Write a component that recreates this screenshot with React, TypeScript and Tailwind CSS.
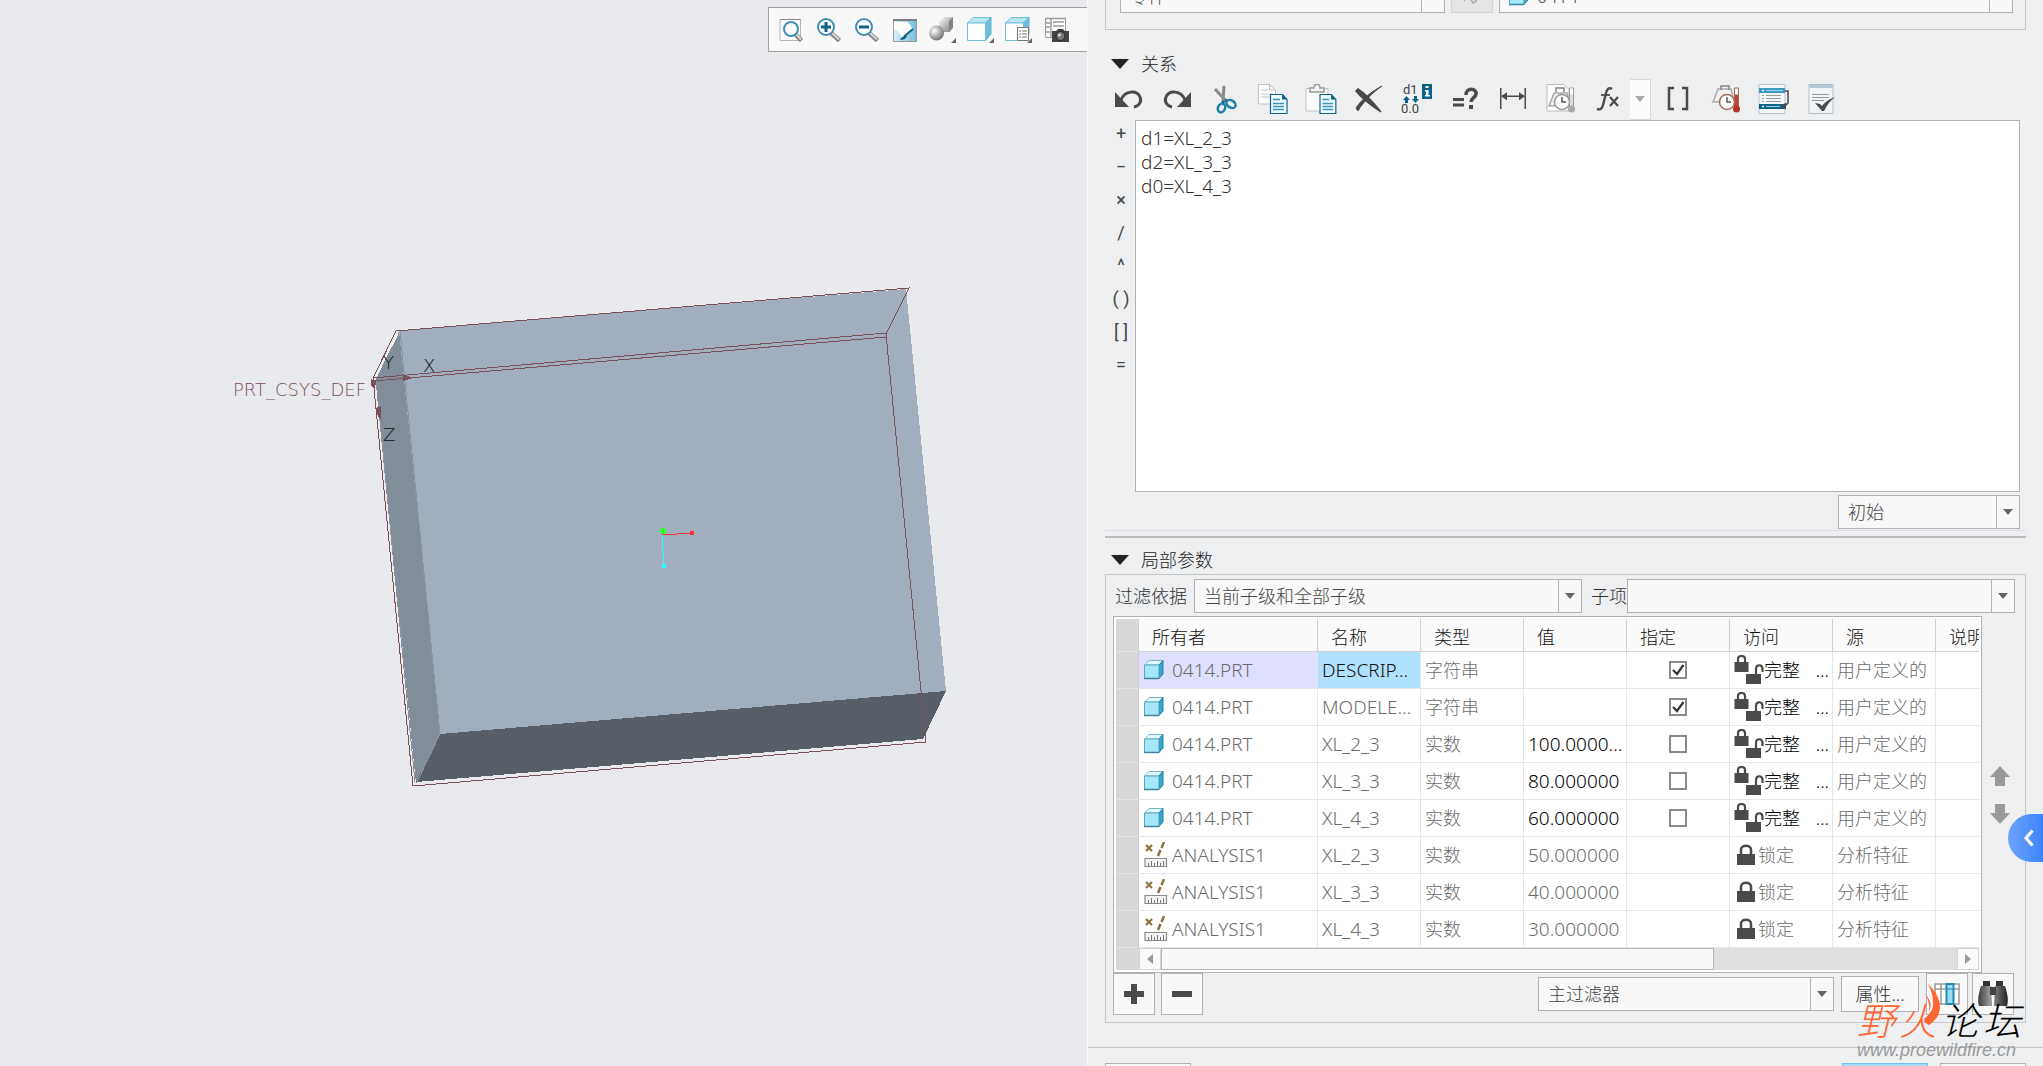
import React from 'react';

const ink = '#4a4a4a';
const blue = '#0e6286';
const maroon = '#7d4f56';

/* ---------- small shared controls ---------- */

type ComboProps = {
  id: string;
  value: string;
  label?: string;
  icon?: React.ReactNode;
  className?: string;
};

const Combo: React.FC<ComboProps> = ({ id, value, label, icon, className = '' }) => (
  <div className={`relative flex h-[34px] items-center border border-[#b0b1b3] bg-[#f8f8f8] pl-[9px] ${className}`}>
    {icon}
    <select
      id={id}
      aria-label={label}
      defaultValue={value}
      className={`h-full min-w-0 flex-1 appearance-none bg-transparent pr-6 text-[18px] text-[#444] outline-none ${icon ? 'pl-2' : ''}`}
    >
      <option value={value}>{value}</option>
    </select>
    <span className="pointer-events-none absolute inset-y-0 right-0 flex w-[23px] items-center justify-center border-l border-[#b0b1b3]">
      <svg width="10" height="6" viewBox="0 0 10 6">
        <path d="M0 0h10L5 6z" fill="#666" />
      </svg>
    </span>
  </div>
);

const SectionTitle: React.FC<{ children: React.ReactNode }> = ({ children }) => (
  <h2 className="flex items-center gap-3 pl-[6px] text-[18px] leading-6 text-[#222]">
    <svg width="18" height="10" viewBox="0 0 18 10">
      <path d="M0 0h18L9 10z" fill="#222" />
    </svg>
    {children}
  </h2>
);

/* ---------- viewport toolbar icons ---------- */

const Lens: React.FC<{ sign?: 'plus' | 'minus'; page?: boolean }> = ({ sign, page }) => {
  const cx = page ? 12 : 9;
  const cy = page ? 11 : 9;
  const r = page ? 7 : 8;
  return (
    <svg width="24" height="24" viewBox="0 0 24 24" fill="none">
      {page && <path d="M1 1.5h20.500v21H1z" fill="#fbfbfb" stroke="#b5b5b5" />}
      {page && <path d="M1 1.500h20.500" stroke="#888" />}
      <path d={`M${cx + 5} ${cy + 6}L22.500 22.500`} stroke="#808080" strokeWidth="4.500" />
      <path d={`M${cx + 5} ${cy + 5}L22 21.500`} stroke="#d9d9d9" strokeWidth="2" />
      <circle cx={cx} cy={cy} r={r} fill="#fff" stroke="#3f8fb3" strokeWidth="2" />
      {sign && <path d={`M${cx - 5} ${cy}h10`} stroke={blue} strokeWidth="3" />}
      {sign === 'plus' && <path d={`M${cx} ${cy - 5}v10`} stroke={blue} strokeWidth="3" />}
    </svg>
  );
};

const RepaintIcon = () => (
  <svg width="24" height="24" viewBox="0 0 24 24">
    <defs>
      <linearGradient id="repaint" x1="0" x2="1" y1="0" y2="0">
        <stop offset="0" stopColor="#d9f1f9" />
        <stop offset="1" stopColor="#74bddb" />
      </linearGradient>
    </defs>
    <path d="M.500 1.500h23v22H.500z" fill="url(#repaint)" stroke="#999" />
    <path d="M1 4h13c3 2 5 5 5 8-3 4-7 5-9 10C8 16 5 13 1 11z" fill="#fff" />
    <path d="M0 1h24v2H0z" fill="#7d7d7d" />
    <path d="M20 11L11 18.500" stroke={blue} strokeWidth="2" />
    <path d="M7 22c2-4 4-4 7-4-1 3-4 4-7 4z" fill={blue} />
  </svg>
);

const Corner = () => <path d="M27 22v5h-5z" fill="#666" />;

const ShadeIcon = () => (
  <svg width="28" height="28" viewBox="0 0 28 28">
    <defs>
      <radialGradient id="ball" cx=".35" cy=".35" r=".7">
        <stop offset="0" stopColor="#fff" />
        <stop offset="1" stopColor="#6e6e6e" />
      </radialGradient>
      <linearGradient id="block" x1="0" x2="1" y1="0" y2="1">
        <stop offset="0" stopColor="#fff" />
        <stop offset="1" stopColor="#777" />
      </linearGradient>
    </defs>
    <path d="M10 5l4-4h10v10l-4 5H10z" fill="url(#block)" />
    <path d="M20 5l4-4v11l-4 4z" fill="#858585" />
    <circle cx="7.500" cy="17" r="7.500" fill="url(#ball)" />
    <Corner />
  </svg>
);

const BoxIcon: React.FC<{ list?: boolean }> = ({ list }) => (
  <svg width="28" height="28" viewBox="0 0 28 28">
    <path d="M.500 7L6 1.500h18L18.500 7z" fill="#bce5f3" stroke="#6fc0dc" />
    <path d="M18.500 7L24 1.500V18l-5.500 6.500z" fill="#6fbdd9" stroke="#5fb4d2" />
    <path d="M.500 7h18v17.500H.500z" fill="#fff" stroke="#6fc0dc" />
    {list && (
      <g>
        <path d="M12.500 11.500h11v13h-11z" fill="#fff" stroke="#777" />
        <path d="M14 15h8M14 18h8M14 21h8" stroke="#777" strokeDasharray="2 1 5" />
      </g>
    )}
    <Corner />
  </svg>
);

const CameraTable = () => (
  <svg width="26" height="26" viewBox="0 0 26 26" fill="none">
    <path d="M1.500 1.500h20v19h-20z" fill="#fff" stroke="#999" />
    <path d="M1 1.500h21M7 1v20M1 6h5M1 10h5M1 15h5M9 5h11M9 9h11" stroke="#999" strokeWidth="1.500" />
    <path d="M8 14h4l2-2h5l2 2h4v11H8z" fill="#444" />
    <circle cx="16.500" cy="19" r="4.500" fill="#777" stroke="#222" />
    <circle cx="15.500" cy="18" r="1.500" fill="#ddd" />
  </svg>
);

/* ---------- relation toolbar icons ---------- */

const Undo: React.FC<{ flip?: boolean }> = ({ flip }) => (
  <svg width="30" height="30" viewBox="0 0 30 30" className={flip ? '-scale-x-100' : ''}>
    <path d="M1 8v15h14z" fill={ink} />
    <path d="M7 16C11 6 23 6 26 13c2 5-1 9-6 10" fill="none" stroke={ink} strokeWidth="3" />
  </svg>
);

const Cut = () => (
  <svg width="30" height="30" viewBox="0 0 30 30" fill="none">
    <path d="M5 5l11 12M14 2l-1 15" stroke="#8a8a8a" strokeWidth="3" />
    <path d="M15 16l2 1M13 17v3" stroke={blue} strokeWidth="3" />
    <ellipse cx="21" cy="20" rx="5" ry="3.500" transform="rotate(35 21 20)" stroke="#1b80aa" strokeWidth="2.500" />
    <ellipse cx="11.500" cy="24" rx="3.500" ry="4.500" transform="rotate(25 11.500 24)" stroke="#1b80aa" strokeWidth="2.500" />
  </svg>
);

const BlueSheet = () => (
  <g>
    <path d="M12.500 10.500h12l4.500 5v14H12.500z" fill="#eefafd" stroke={blue} strokeWidth="1.200" />
    <path d="M24 10.500v5h5z" fill={blue} />
    <path d="M15 15.500h7M15 19.500h11M15 22.500h11M15 25.500h11" stroke="#3c93b7" strokeWidth="1.500" />
  </g>
);

const Copy = () => (
  <svg width="30" height="30" viewBox="0 0 30 30" fill="none">
    <path d="M.500.500h11l6 5.500v14H.500z" fill="#fbfbfb" stroke="#c3c3c3" />
    <path d="M11.500.500V6h6" stroke="#c3c3c3" />
    <path d="M3 6h7M3 10h12M3 13h12" stroke="#c6c6c6" />
    <BlueSheet />
  </svg>
);

const Paste = () => (
  <svg width="32" height="30" viewBox="0 0 32 30" fill="none">
    <path d="M1 4.500h22V27H1z" fill="#fafafa" stroke="#c4c4c4" />
    <path d="M5 8V4h4c0-5 6-5 6 0h4v4z" fill="#f4f4f4" stroke="#999" strokeWidth="1.500" />
    <g transform="translate(3 0) scale(.96 1)">
      <BlueSheet />
    </g>
  </svg>
);

const Delete = () => (
  <svg width="30" height="30" viewBox="0 0 30 30" fill="none">
    <path d="M4 5c8 5 15 13 23 23-9-6-18-12-25-21z" fill={ink} stroke={ink} strokeWidth="1.500" />
    <path d="M28 2C19 8 9 18 4 27L2 24C8 15 17 8 28 2z" fill={ink} stroke={ink} />
  </svg>
);

const Switch = () => (
  <svg width="32" height="34" viewBox="0 0 32 34" fontFamily="Roboto, sans-serif" fontSize="13" fontWeight="400" fill="#444">
    <text x="2" y="12">d1</text>
    <text x="0" y="31">0.0</text>
    <path d="M5.500 14l3.500 4H7v3H4v-3H2zM14.500 21l-3.500-4h2v-3h3v3h2z" fill={blue} />
    <rect x="21" y="2" width="10" height="15" fill={blue} />
    <path d="M24.500 4h3v2h-3zM24 8h3.500v5H29v1.500h-5V13h1V9.500h-1z" fill="#fff" />
  </svg>
);

const Evaluate = () => (
  <svg width="28" height="28" viewBox="0 0 28 28" fill={ink}>
    <path d="M2 13h11v3H2zM2 18.500h11v3H2z" />
    <path d="M15 10c0-8 11-7 10-1-.500 4-5 4-5 8" fill="none" stroke={ink} strokeWidth="3.500" />
    <path d="M18 20h4v4h-4z" />
  </svg>
);

const Dimension = () => (
  <svg width="28" height="28" viewBox="0 0 28 28" fill={ink}>
    <path d="M1 3h1.500v21H1zM25.500 3H27v21h-1.500zM3 10.500h22V12H3z" />
    <path d="M2 11.200l6-4v8zM26 11.200l-6-4v8z" />
  </svg>
);

const Gauge: React.FC<{ hot?: boolean }> = ({ hot }) => {
  const rim = hot ? '#a06a5e' : '#999';
  return (
    <svg width="30" height="32" viewBox="0 0 30 32" fill="none">
      {!hot && <path d="M1 1.500h17l5 5V28H1z" fill="#fafcfd" stroke="#bbb" />}
      <path d="M3 23L8 10h13l3 12z" fill="#f0f0f0" stroke="#aaa" strokeWidth="1.500" transform={hot ? 'translate(-1 -4)' : undefined} />
      <path d="M10 9V5h8v4" stroke="#888" strokeWidth="1.500" transform={hot ? 'translate(0 -2)' : undefined} />
      <circle cx="16" cy="19" r="7.500" fill="#fff" stroke={rim} strokeWidth="1.500" />
      <path d="M16 14v5h4" stroke="#555" strokeWidth="1.500" />
      <path d="M23.500 5h4v19h-4z" fill={hot ? '#c64034' : '#ddd'} stroke={rim} />
      <path d="M24 5.500h3v6h-3z" fill="#fff" />
      <circle cx="25.500" cy="26" r="3.500" fill={hot ? '#b53329' : '#aaa'} />
    </svg>
  );
};

const Fx = () => (
  <svg width="28" height="28" viewBox="0 0 28 28" fill="none" stroke={ink}>
    <path d="M18 4c-3-2-5 0-6 4L9 20c-1 4-3 5-6 4" strokeWidth="2.400" />
    <path d="M7 10h9" strokeWidth="1.800" />
    <path d="M16 12l8 9M24 12l-8 9" strokeWidth="2.200" />
  </svg>
);

const Brackets = () => (
  <svg width="24" height="26" viewBox="0 0 24 26" fill="none" stroke={ink} strokeWidth="2.500">
    <path d="M8 2H3v21h5M16 2h5v21h-5" />
  </svg>
);

const SortIcon = () => (
  <svg width="32" height="32" viewBox="0 0 32 32" fill="none">
    <path d="M1 1.500h26v29H1z" fill="#f2f8fa" stroke="#b9c3c7" />
    <path d="M1 5h26v5H1z" fill="#3a9ac4" />
    <path d="M1 21h26v5H1z" fill={blue} />
    <path d="M4 7.500h2M4 23.500h2" stroke="#fff" strokeWidth="1.500" />
    <path d="M8 7.500h17M8 23.500h14" stroke="#9bd3ea" />
    <path d="M4 12.500h2M4 15.500h2M4 18.500h2M8 12.500h15M8 15.500h15M8 18.500h15" stroke="#999" />
    <path d="M27 8h3v12l-3 3" stroke={ink} strokeWidth="1.500" />
    <path d="M23 23.500l5-4v7z" fill={ink} />
  </svg>
);

const Verify = () => (
  <svg width="30" height="32" viewBox="0 0 30 32" fill="none">
    <path d="M2 1.500h24v29H2z" fill="#f0f6f8" stroke="#b4bec2" />
    <path d="M2.500 2h23v3h-23z" fill="#aecbd7" />
    <path d="M5 11.500h17M5 14.500h17M5 17.500h12" stroke="#999" />
    <path d="M8 20l5 1 2 2c3-4 7-7 13-9-5 4-8 8-11 14h-2z" fill={ink} />
  </svg>
);

/* ---------- table icons ---------- */

const PartIcon = () => (
  <svg width="20" height="20" viewBox="0 0 20 20" className="shrink-0">
    <path d="M.500 5L5 .500h14L15 5z" fill="#e2f8fd" stroke="#72b5cb" />
    <path d="M15 5l4-4.500V14l-4 4.500z" fill="#2fa9d2" stroke="#257e9f" />
    <path d="M.500 5H15v13.500H.500z" fill="#a5e6f8" stroke="#5fa5bd" />
    <path d="M0 18.500h15" stroke="#3f86a3" strokeWidth="1.500" />
  </svg>
);

const AnalysisIcon = () => (
  <svg width="24" height="26" viewBox="0 0 24 26" fill="none">
    <path d="M2 3l6 6M8 3L2 9" stroke="#8f7443" strokeWidth="2.200" />
    <path d="M20 0l-2.500 6M16.500 8L14 14" stroke="#8f7443" strokeWidth="2.500" />
    <path d="M1 16.500h21.500v8H1z" fill="#f4f4f4" stroke="#8c8c8c" strokeWidth="1.200" />
    <path d="M4.500 21v3M7.500 19v5M10.500 21v3M13.500 19v5M16.500 21v3M19.500 19v5" stroke="#777" />
  </svg>
);

const FullAccessIcon = () => (
  <svg width="30" height="30" viewBox="0 0 30 30" fill="none">
    <path d="M.500 7h14v10H.500z" fill={ink} />
    <path d="M4 8V4C4 0 11 0 11 4v4" stroke={ink} strokeWidth="2.200" />
    <path d="M12 19h15v10H12z" fill={ink} />
    <path d="M22 19v-5c0-5 6.500-5 6.500 0v3" stroke={ink} strokeWidth="2.200" />
  </svg>
);

const LockIcon = () => (
  <svg width="18" height="22" viewBox="0 0 18 22" fill="none">
    <path d="M0 10h18v11H0z" fill={ink} />
    <path d="M4 11V5.500C4 .500 14 .500 14 5.500V11" stroke={ink} strokeWidth="2.500" />
  </svg>
);

const ColumnsIcon = () => (
  <svg width="26" height="24" viewBox="0 0 26 24" fill="none">
    <path d="M1 2h24v20H1zM7 2v20M1 7h24" stroke="#999" strokeWidth="1.500" fill="#fff" />
    <path d="M12.500 2h7v20h-7z" fill="#9bdcf3" stroke="#2189b5" strokeWidth="2" />
    <path d="M12 7h8" stroke="#2189b5" />
  </svg>
);

const Binoculars = () => (
  <svg width="30" height="28" viewBox="0 0 30 28">
    <defs>
      <linearGradient id="barrel" x1="0" x2="1">
        <stop offset="0" stopColor="#3c3c3c" />
        <stop offset=".4" stopColor="#999" />
        <stop offset="1" stopColor="#222" />
      </linearGradient>
    </defs>
    <path d="M5 1h7v5H5zM18 1h7v5h-7z" fill="#333" />
    <path d="M3 6h10l1 20H1c-2-6 0-14 2-20zM17 6h10c2 6 4 14 2 20H16z" fill="url(#barrel)" />
    <path d="M12 7h6v8h-6z" fill="#444" />
  </svg>
);

/* ---------- model view ---------- */

const viewTools = [
  { name: '重新调整', icon: <Lens page /> },
  { name: '放大', icon: <Lens sign="plus" /> },
  { name: '缩小', icon: <Lens sign="minus" /> },
  { name: '重画', icon: <RepaintIcon /> },
  { name: '渲染', icon: <ShadeIcon /> },
  { name: '显示样式', icon: <BoxIcon /> },
  { name: '已保存方向', icon: <BoxIcon list /> },
  { name: '视图管理器', icon: <CameraTable /> },
];

const ModelView = () => (
  <section className="relative min-w-0 overflow-hidden bg-[#e8eaee]">
    <svg
      className="absolute left-0 top-0"
      width="1087"
      height="1066"
      viewBox="0 0 1087 1066"
      fill="none"
      shapeRendering="crispEdges"
    >
      <path d="M399 331L906 289L946 691L440 734z" fill="#a1aebe" />
      <path d="M399 331L440 734L416 784L376 379z" fill="#818d98" />
      <path d="M440 734L946 691L923 739L416 782z" fill="#575e68" />
      <path d="M400 331L440 734L417 782M376 380L415 782" stroke="#8f939d" />
      <path d="M398 334L376 376" stroke="#fff" />
      <g stroke={maroon}>
        <path d="M373 378L396 331L909 288L886 334L926 742L413 786z" />
        <path d="M373 378L886 333M374 381L886 337" />
      </g>
      <g fill={maroon}>
        <path d="M371 379l5 2-1 8-4-3zM403 374l9 4-9 3zM376 408l5-2v13l-3-2z" />
      </g>
      <g fontFamily="'DejaVu Sans', sans-serif" fontWeight="200" fontSize="18">
        <text x="233" y="396" fill={maroon}>PRT_CSYS_DEF</text>
        <g fill="#111">
          <text x="383" y="369">Y</text>
          <text x="423" y="372">X</text>
          <text x="383" y="441">Z</text>
        </g>
      </g>
      <path d="M662 535L692 533" stroke="#f33" />
      <path d="M662 535L664 566" stroke="#2ff" />
      <circle cx="692" cy="533" r="2.500" fill="#f33" />
      <circle cx="664" cy="566" r="2.500" fill="#2ff" />
      <circle cx="663" cy="531" r="3" fill="#3f3" />
    </svg>
    <div className="relative ml-auto mt-[7px] flex h-[45px] w-[319px] items-center border border-r-0 border-[#a0a0a0] bg-[#f8f8f8] pl-[3px]">
      {viewTools.map((tool) => (
        <button key={tool.name} aria-label={tool.name} className="flex h-10 w-[38px] items-center justify-center">
          {tool.icon}
        </button>
      ))}
    </div>
  </section>
);

/* ---------- relations ---------- */

const editTools = [
  { name: '撤消', icon: <Undo /> },
  { name: '重做', icon: <Undo flip /> },
  { name: '剪切', icon: <Cut /> },
  { name: '复制', icon: <Copy /> },
  { name: '粘贴', icon: <Paste /> },
  { name: '删除', icon: <Delete /> },
  { name: '切换尺寸', icon: <Switch /> },
  { name: '计算', icon: <Evaluate /> },
  { name: '显示尺寸', icon: <Dimension /> },
  { name: '单位', icon: <Gauge /> },
];

const moreTools = [
  { name: '插入参数', icon: <Brackets /> },
  { name: '单位敏感', icon: <Gauge hot /> },
  { name: '排序', icon: <SortIcon /> },
  { name: '校验', icon: <Verify /> },
];

const operators = ['+', '−', '×', '/', '^', '( )', '[ ]', '='];

const Relations = () => (
  <section className="flex min-h-0 flex-1 flex-col">
    <div className="h-12 pt-[22px]">
      <SectionTitle>关系</SectionTitle>
    </div>
    <div className="flex h-[42px] items-center">
      {editTools.map((tool) => (
        <button key={tool.name} aria-label={tool.name} className="flex h-10 w-12 items-center justify-center">
          {tool.icon}
        </button>
      ))}
      <button aria-label="函数" className="flex h-10 w-[45px] items-center justify-center">
        <Fx />
      </button>
      <button aria-label="函数列表" className="mr-[3px] flex h-[41px] w-[21px] items-center justify-center border border-l-0 border-[#d8d9db] bg-[#fbfbfb]">
        <svg width="10" height="6" viewBox="0 0 10 6">
          <path d="M0 0h10L5 6z" fill="#aaa" />
        </svg>
      </button>
      {moreTools.map((tool) => (
        <button key={tool.name} aria-label={tool.name} className="flex h-10 w-12 items-center justify-center">
          {tool.icon}
        </button>
      ))}
    </div>
    <div className="flex min-h-0 flex-1 pr-[6px]">
      <div className="flex w-[30px] flex-col pl-[2px]">
        {operators.map((op) => (
          <button key={op} className="h-[33px] whitespace-nowrap pb-[6px] text-center font-['Roboto',sans-serif] text-[18px] font-normal leading-[26px] text-[#444]">
            {op}
          </button>
        ))}
      </div>
      <textarea
        aria-label="关系"
        spellCheck={false}
        defaultValue={'d1=XL_2_3\nd2=XL_3_3\nd0=XL_4_3'}
        className="min-w-0 flex-1 resize-none border border-[#b0b1b3] bg-white px-[5px] py-[5px] text-[19px] leading-6 text-[#333] outline-none"
      />
    </div>
    <div className="flex justify-end pb-px pr-[6px] pt-[3px]">
      <Combo id="relation-phase" label="关系阶段" value="初始" className="w-[182px]" />
    </div>
    <div className="h-2 border-b-2 border-t border-b-[#bcbdbf] border-t-[#dcdde0]" />
  </section>
);

/* ---------- parameters ---------- */

type Param = {
  owner: string;
  name: string;
  type: string;
  value: string;
  marked?: boolean;
};

const params: Param[] = [
  { owner: '0414.PRT', name: 'DESCRIP...', type: '字符串', value: '', marked: true },
  { owner: '0414.PRT', name: 'MODELE...', type: '字符串', value: '', marked: true },
  { owner: '0414.PRT', name: 'XL_2_3', type: '实数', value: '100.0000...', marked: false },
  { owner: '0414.PRT', name: 'XL_3_3', type: '实数', value: '80.000000', marked: false },
  { owner: '0414.PRT', name: 'XL_4_3', type: '实数', value: '60.000000', marked: false },
  { owner: 'ANALYSIS1', name: 'XL_2_3', type: '实数', value: '50.000000' },
  { owner: 'ANALYSIS1', name: 'XL_3_3', type: '实数', value: '40.000000' },
  { owner: 'ANALYSIS1', name: 'XL_4_3', type: '实数', value: '30.000000' },
];

const headings = ['所有者', '名称', '类型', '值', '指定', '访问', '源', '说明'];
const cell = 'h-[37px] overflow-hidden whitespace-nowrap border-b border-r border-[#e3e6ea] p-0';

const ParamRow: React.FC<{ param: Param; selected: boolean }> = ({ param, selected }) => {
  const editable = param.marked !== undefined;
  return (
    <tr className="text-[#6c6c6c]">
      <td className="border-b border-r border-b-[#e3e3e3] border-r-[#ccc] bg-[#d8d8d8] p-0" />
      <td className={`${cell} ${selected ? 'bg-[#dfdfff]' : ''}`}>
        <div className="flex items-center pl-[5px] text-[19px]">
          <span className="w-7">{editable ? <PartIcon /> : <AnalysisIcon />}</span>
          {param.owner}
        </div>
      </td>
      <td className={`${cell} pl-1 text-[19px] ${selected ? 'bg-[#b0e2ff] text-[#111]' : ''}`}>{param.name}</td>
      <td className={`${cell} pl-1`}>{param.type}</td>
      <td className={`${cell} pl-1 text-[19px] ${editable ? 'text-black' : ''}`}>{param.value}</td>
      <td className={cell}>
        {editable && (
          <label className="relative mx-auto block h-[18px] w-[18px]">
            <input
              type="checkbox"
              aria-label={`指定 ${param.name}`}
              defaultChecked={param.marked}
              className="peer block h-[18px] w-[18px] appearance-none border-2 border-[#8a8a8a] bg-white"
            />
            <svg className="pointer-events-none absolute inset-0 hidden peer-checked:block" width="18" height="18" viewBox="0 0 18 18" fill="none">
              <path d="M4 9l4 4 6.500-9" stroke="#333" strokeWidth="2.200" />
            </svg>
          </label>
        )}
      </td>
      <td className={cell}>
        {editable ? (
          <div className="flex items-center pl-1 pr-[3px] text-black">
            <FullAccessIcon />
            <span>完整</span>
            <span className="ml-auto">...</span>
          </div>
        ) : (
          <div className="flex items-center gap-[3px] pl-[7px]">
            <LockIcon />
            <span>锁定</span>
          </div>
        )}
      </td>
      <td className={`${cell} pl-1`}>{editable ? '用户定义的' : '分析特征'}</td>
      <td className="border-b border-[#e3e6ea] p-0" />
    </tr>
  );
};

const ParamTable = () => (
  <div className="min-w-0 flex-1 border border-[#b0b1b3] bg-white p-[2px]">
    <table className="w-full table-fixed border-separate border-spacing-0 text-[18px] leading-6">
      <colgroup>
        <col className="w-[23px]" />
        <col className="w-[179px]" />
        {headings.slice(1, 7).map((heading) => (
          <col key={heading} className="w-[103px]" />
        ))}
        <col />
      </colgroup>
      <thead>
        <tr className="text-[#111]">
          <td className="h-[33px] border-b border-r border-b-[#e3e3e3] border-r-[#ccc] bg-[#d8d8d8] p-0" />
          {headings.map((heading) => (
            <th
              key={heading}
              className="h-[33px] overflow-hidden whitespace-nowrap border-b border-r border-[#ced0d3] bg-[#fafafa] p-0 pl-[13px] pt-1 text-left font-light last:border-r-0"
            >
              {heading}
            </th>
          ))}
        </tr>
      </thead>
      <tbody>
        {params.map((param, i) => (
          <ParamRow key={param.owner + param.name} param={param} selected={i === 0} />
        ))}
      </tbody>
    </table>
    <div className="flex h-[22px] bg-[#dedfe1]">
      <div className="w-[23px] bg-[#d8d8d8]" />
      <button aria-label="向左滚动" className="flex w-[22px] items-center justify-center border border-[#d3d4d6] bg-[#fafafa]">
        <svg width="6" height="10" viewBox="0 0 6 10"><path d="M6 0v10L0 5z" fill="#999" /></svg>
      </button>
      <div className="grid flex-1 grid-cols-[553fr_243fr]">
        <div className="border border-[#b5b6b8] bg-[#f8f8f8]" />
      </div>
      <button aria-label="向右滚动" className="flex w-[22px] items-center justify-center border border-[#d3d4d6] bg-[#fafafa]">
        <svg width="6" height="10" viewBox="0 0 6 10"><path d="M0 0v10l6-5z" fill="#999" /></svg>
      </button>
    </div>
  </div>
);

const squareButton = 'flex h-[42px] w-[42px] items-center justify-center border border-[#b0b1b3] bg-[#f8f8f8]';

const LocalParams = () => (
  <section className="shrink-0">
    <div className="h-9 pt-[10px]">
      <SectionTitle>局部参数</SectionTitle>
    </div>
    <div className="border border-[#c5c6c8] pb-[7px] pt-1 text-[18px] text-[#333]">
      <div className="flex items-center pl-[9px] pr-[10px]">
        <label htmlFor="filter-by" className="mr-[7px]">过滤依据</label>
        <Combo id="filter-by" value="当前子级和全部子级" className="flex-1" />
        <label htmlFor="sub-item" className="ml-[9px]">子项</label>
        <Combo id="sub-item" value="" className="flex-1" />
      </div>
      <div className="mt-[3px] flex pl-[7px]">
        <ParamTable />
        <div className="flex w-[43px] flex-col items-center justify-center gap-[18px] pr-2">
          <button aria-label="上移">
            <svg width="20" height="20" viewBox="0 0 20 20"><path d="M10 0l10 11h-5v9H5v-9H0z" fill="#999" /></svg>
          </button>
          <button aria-label="下移">
            <svg width="20" height="20" viewBox="0 0 20 20"><path d="M10 20L0 9h5V0h10v9h5z" fill="#999" /></svg>
          </button>
        </div>
      </div>
      <div className="flex items-center pl-[7px] pr-[11px]">
        <button aria-label="添加参数" className={squareButton}>
          <svg width="22" height="22" viewBox="0 0 22 22"><path d="M8 1h6v7h7v6h-7v7H8v-7H1V8h7z" fill={ink} /></svg>
        </button>
        <button aria-label="移除参数" className={`${squareButton} ml-[6px]`}>
          <svg width="22" height="22" viewBox="0 0 22 22"><path d="M1 8h20v6H1z" fill={ink} /></svg>
        </button>
        <Combo id="main-filter" label="主过滤器" value="主过滤器" className="ml-auto w-[296px]" />
        <button className="ml-[7px] h-9 w-[78px] border border-[#b0b1b3] bg-[#f8f8f8]">属性...</button>
        <button aria-label="设置列" className={`${squareButton} ml-[7px]`}><ColumnsIcon /></button>
        <button aria-label="查找" className={`${squareButton} ml-1`}><Binoculars /></button>
      </div>
    </div>
  </section>
);

const Watermark = () => (
  <div className="pointer-events-none absolute bottom-[6px] right-[22px] w-[164px]">
    <div className="flex justify-between text-[38px] italic leading-10 text-black">
      <span className="text-[#ff6632]">野</span>
      <span className="text-[#ff6632]">火</span>
      <span>论</span>
      <span>坛</span>
    </div>
    <div className="whitespace-nowrap font-['Liberation_Sans',sans-serif] text-[18px] font-normal italic leading-5 text-[#999]">
      www.proewildfire.cn
    </div>
    <svg className="absolute -top-4 left-[64px]" width="22" height="42" viewBox="0 0 22 42">
      <path d="M7 0c10 9 14 20 11 29-2 6-6 9-10 12-3-1-5-3-5-6 6-5 10-10 9-17C12 11 10 6 7 0z" fill="#ff6632" />
      <path d="M4 10c6 6 7 12 4 18 1-6 0-11-4-18z" fill="#ff6632" />
    </svg>
  </div>
);

const App: React.FC = () => {
  return (
    <main className="relative grid h-screen grid-cols-[1087fr_956fr] overflow-hidden font-['Noto_Sans','Noto_Sans_CJK_SC',sans-serif] font-light">
      <ModelView />

      <aside className="flex min-w-0 flex-col overflow-hidden border-l border-[#f8f8f8] bg-[#edeff1]">
        <div className="flex min-h-0 flex-1 flex-col pl-[17px] pr-[17px]">
          {/* Object selection, scrolled mostly out of view */}
          <div className="grid h-[30px] shrink-0 grid-cols-[325fr_42px_514fr] content-end items-end gap-x-[6px] overflow-hidden border border-t-0 border-[#c5c6c8] pb-4 pl-[14px] pr-3">
            <Combo id="object-type" label="对象类型" value="零件" />
            <button aria-label="选择" className="flex h-[34px] items-end justify-center border border-[#d3d4d6] bg-[#e4e5e7] pb-2">
              <svg width="16" height="22" viewBox="0 0 16 22">
                <path d="M1 1l12 11-5 1 4 6-3 2-4-7-4 4z" fill="#eee" stroke="#aaa" strokeWidth="1.500" />
              </svg>
            </button>
            <Combo id="object-name" label="对象" value="0414" icon={<PartIcon />} />
          </div>
          <Relations />
          <LocalParams />
        </div>

        {/* Dialog footer */}
        <footer className="mt-6 h-[19px] shrink-0 overflow-hidden border-t border-[#c5c6c8] pl-[17px] pr-[17px] pt-[15px]">
          <div className="flex">
            <button aria-label="重置" className="h-9 w-[86px] border border-[#b0b1b3] bg-[#f8f8f8]" />
            <button aria-label="确定" className="ml-auto h-9 w-[86px] border border-[#6fc3ec] bg-[#a3dcfb]" />
            <button aria-label="取消" className="ml-3 h-9 w-[86px] border border-[#b0b1b3] bg-[#f8f8f8]" />
          </div>
        </footer>
      </aside>

      <button
        aria-label="展开"
        className="absolute right-0 top-[814px] flex h-12 w-[35px] items-center rounded-l-full bg-linear-to-r from-[#6ea3fb] to-[#3d84fb] pl-4"
      >
        <svg width="10" height="18" viewBox="0 0 10 18" fill="none">
          <path d="M8.500 1.500L2 9l6.500 7.500" stroke="#fff" strokeWidth="3" />
        </svg>
      </button>
      <Watermark />
    </main>
  );
};

export default App;
